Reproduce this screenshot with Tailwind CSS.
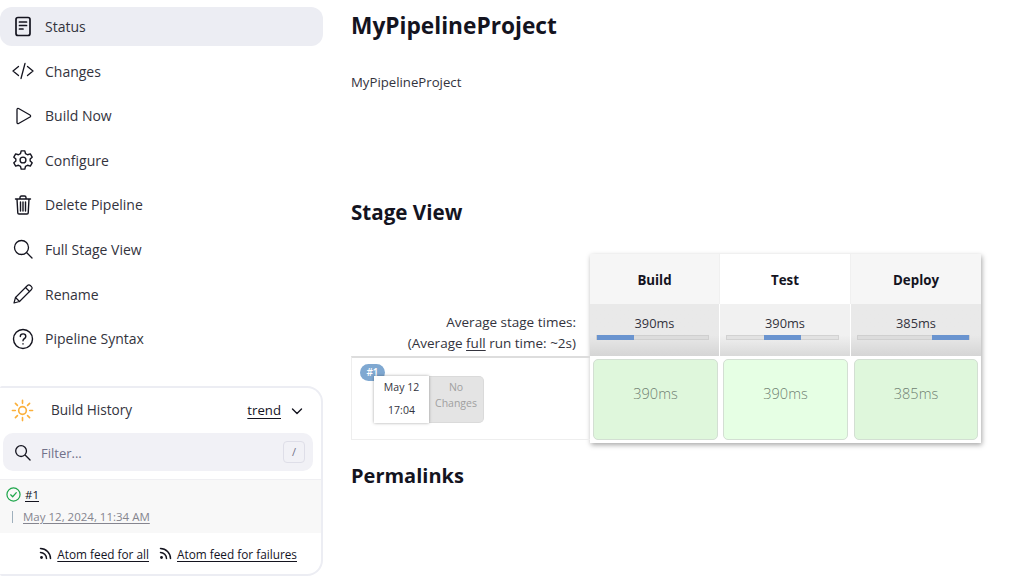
<!DOCTYPE html>
<html lang="en">
<head>
  <meta charset="UTF-8">
  <meta name="viewport" content="width=device-width, initial-scale=1.0">
  <title>MyPipelineProject</title>
  <script src="https://cdn.jsdelivr.net/npm/@tailwindcss/browser@4"></script>
</head>
<body class="bg-white h-[582px] w-[1010px] overflow-hidden font-['Open_Sans','Noto_Sans',sans-serif] text-[#14141f]">
  <div class="flex">
    <!-- sidebar -->
    <aside class="w-[323px] shrink-0 pt-[7px]">
      <nav class="flex flex-col gap-[5.6px] text-[14px] font-medium text-[#33333d]">
        <a class="flex items-center h-[39px] rounded-[12px] bg-[#ecedf3]">
          <span class="w-[45px] flex justify-center">
            <svg class="w-[22px] h-[22px]" viewBox="0 0 22 22" fill="none" stroke="#14141f" stroke-width="1.700" stroke-linecap="round" stroke-linejoin="round"><rect x="4" y="1.500" width="14" height="18" rx="2"/><path d="M7.500 6h7M7.500 9.500h7M7.500 13h3.500"/></svg>
          </span>
          <span>Status</span>
        </a>
        <a class="flex items-center h-[39px]">
          <span class="w-[45px] flex justify-center">
            <svg class="w-[22px] h-[22px]" viewBox="0 0 22 22" fill="none" stroke="#14141f" stroke-width="1.300" stroke-linecap="round" stroke-linejoin="round"><path d="M6.500 6.500 1 11l5.500 4.500M15.500 6.500 21 11l-5.500 4.500M13 3.500 9 18.500"/></svg>
          </span>
          <span>Changes</span>
        </a>
        <a class="flex items-center h-[39px]">
          <span class="w-[45px] flex justify-center">
            <svg class="w-[22px] h-[22px]" viewBox="0 0 22 22" fill="none" stroke="#14141f" stroke-width="1.300" stroke-linecap="round" stroke-linejoin="round"><path d="M5 4.500c0-1 .8-1.400 1.600-1L18 10c.8.500.8 1.500 0 2L6.600 18.500c-.8.400-1.600 0-1.600-1z"/></svg>
          </span>
          <span>Build Now</span>
        </a>
        <a class="flex items-center h-[39px]">
          <span class="w-[45px] flex justify-center">
            <svg class="w-[22px] h-[22px]" viewBox="0 0 24 24" fill="none" stroke="#14141f" stroke-width="1.500" stroke-linecap="round" stroke-linejoin="round"><path d="M10 2h4l.7 3 2.300 1.300 3-.9 2 3.500-2.200 2.100v2l2.200 2.100-2 3.500-3-.9-2.300 1.300-.7 3h-4l-.7-3L7 17.700l-3 .9-2-3.500 2.200-2.100v-2L2 8.900l2-3.500 3 .9L9.300 5z"/><circle cx="12" cy="12" r="3.200"/></svg>
          </span>
          <span>Configure</span>
        </a>
        <a class="flex items-center h-[39px]">
          <span class="w-[45px] flex justify-center">
            <svg class="w-[22px] h-[22px]" viewBox="0 0 22 22" fill="none" stroke="#14141f" stroke-width="1.400" stroke-linecap="round" stroke-linejoin="round"><path d="M3.500 5h15M8 5V3.500c0-.8.500-1.500 1.500-1.500h3c1 0 1.500.7 1.500 1.500V5M5 5l.8 14c0 .7.600 1 1.200 1h8c.6 0 1.200-.3 1.200-1L17 5M8.500 8v9M11 8v9M13.500 8v9"/></svg>
          </span>
          <span>Delete Pipeline</span>
        </a>
        <a class="flex items-center h-[39px]">
          <span class="w-[45px] flex justify-center">
            <svg class="w-[22px] h-[22px]" viewBox="0 0 22 22" fill="none" stroke="#14141f" stroke-width="1.300" stroke-linecap="round"><circle cx="9.500" cy="9.500" r="7"/><path d="m14.800 14.800 5.200 5.200"/></svg>
          </span>
          <span>Full Stage View</span>
        </a>
        <a class="flex items-center h-[39px]">
          <span class="w-[45px] flex justify-center">
            <svg class="w-[22px] h-[22px]" viewBox="0 0 22 22" fill="none" stroke="#14141f" stroke-width="1.200" stroke-linecap="round" stroke-linejoin="round"><path d="M2 20l1.500-5.500L15.500 2.500c.8-.8 2-.8 2.800 0l1.200 1.200c.8.800.8 2 0 2.800L7.500 18.500z"/><path d="M13.500 4.500l4 4M3.500 14.500l4 4"/></svg>
          </span>
          <span>Rename</span>
        </a>
        <a class="flex items-center h-[39px]">
          <span class="w-[45px] flex justify-center">
            <svg class="w-[22px] h-[22px]" viewBox="0 0 22 22" fill="none" stroke="#14141f" stroke-width="1.400" stroke-linecap="round" stroke-linejoin="round"><circle cx="11" cy="11" r="9.500"/><path d="M8.300 8.500c0-1.600 1.200-2.600 2.800-2.600s2.700 1 2.700 2.500c0 2.200-2.800 2.300-2.800 4.400"/><path d="M11 15.800v.2"/></svg>
          </span>
          <span>Pipeline Syntax</span>
        </a>
      </nav>

      <!-- build history -->
      <section class="mt-[28px] h-[190px] border-2 border-l-0 border-[#ecedf3] rounded-r-[16px] rounded-l-[2px] flex flex-col">
        <div class="flex items-center h-[45px] pl-[11px] pr-[18px] text-[13.600px] font-medium text-[#33333d]">
          <svg class="w-[23px] h-[23px] shrink-0" viewBox="0 0 24 24" fill="none" stroke="#fbb03b" stroke-width="1.700" stroke-linecap="round"><circle cx="12" cy="12" r="4"/><path d="M12 1.500v3M12 19.500v3M1.500 12h3M19.500 12h3M4.600 4.600l2.100 2.100M17.300 17.300l2.100 2.100M4.600 19.400l2.100-2.100M17.300 6.700l2.100-2.100"/></svg>
          <span class="ml-[17px]">Build History</span>
          <a class="ml-auto text-[13.200px] underline underline-offset-[3px] text-[#14141f]">trend</a>
          <svg class="w-[12px] h-[12px] ml-[10px]" viewBox="0 0 12 12" fill="none" stroke="#14141f" stroke-width="1.400" stroke-linecap="round" stroke-linejoin="round"><path d="M1.500 4 6 8.500 10.500 4"/></svg>
        </div>
        <div class="mx-[3px] w-[310px] h-[38px] rounded-[10px] bg-[#f1f1f6] flex items-center pl-[11px] pr-[8px] text-[13px]">
          <svg class="w-[17px] h-[17px] shrink-0" viewBox="0 0 18 18" fill="none" stroke="#14141f" stroke-width="1.400" stroke-linecap="round"><circle cx="7.500" cy="7.500" r="5.700"/><path d="m12 12 5 5"/></svg>
          <span class="ml-[10px] pt-[3px] font-medium text-[#72728a]">Filter...</span>
          <span class="ml-auto w-[22px] h-[22px] border border-[#dedee8] rounded-[4px] flex items-center justify-center text-[11px] text-[#72728a]">/</span>
        </div>
        <div class="mt-[8px] h-[54px] bg-[#f8f8f8] border-t border-[#efeff2] pl-[6px] pt-[4px]">
          <div class="flex items-center h-[20px]">
            <svg class="w-[15px] h-[15px]" viewBox="0 0 16 16" fill="none" stroke="#1ea64b" stroke-width="1.300" stroke-linecap="round" stroke-linejoin="round"><circle cx="8" cy="8" r="7"/><path d="m5 8.300 2.100 2.100L11 6"/></svg>
            <a class="ml-[4px] text-[11.500px] underline underline-offset-[2px]">#1</a>
          </div>
          <div class="flex items-center h-[25px] text-[11.500px] text-[#85858f]">
            <span class="ml-[6px] w-px h-[12px] bg-[#9fb0bd]"></span>
            <a class="ml-[10px] underline underline-offset-[2px]">May 12, 2024, 11:34 AM</a>
          </div>
        </div>
        <div class="flex items-center justify-end gap-[10px] pt-[13px] pr-[24px] text-[11.800px] font-medium">
          <span class="flex items-center gap-[4px]">
            <svg class="w-[14px] h-[14px] -mt-[5px]" viewBox="0 0 14 14" fill="none" stroke="#14141f" stroke-width="1.500" stroke-linecap="round"><circle cx="2.500" cy="11.500" r="1.400" fill="#14141f" stroke="none"/><path d="M1.500 6.500c3.300 0 6 2.700 6 6M1.500 2.500c5.500 0 10 4.500 10 10"/></svg>
            <a class="underline underline-offset-[2px]">Atom feed for all</a>
          </span>
          <span class="flex items-center gap-[4px]">
            <svg class="w-[14px] h-[14px] -mt-[5px]" viewBox="0 0 14 14" fill="none" stroke="#14141f" stroke-width="1.500" stroke-linecap="round"><circle cx="2.500" cy="11.500" r="1.400" fill="#14141f" stroke="none"/><path d="M1.500 6.500c3.300 0 6 2.700 6 6M1.500 2.500c5.500 0 10 4.500 10 10"/></svg>
            <a class="underline underline-offset-[2px]">Atom feed for failures</a>
          </span>
        </div>
      </section>
    </aside>

    <!-- main -->
    <main class="ml-[28px] w-[640px]">
      <h1 class="mt-[9px] text-[22.700px] leading-[34px] font-bold">MyPipelineProject</h1>
      <p class="mt-[30px] text-[13.200px] leading-[18px] text-[#33333d]">MyPipelineProject</p>

      <h2 class="mt-[107px] text-[20.600px] leading-[28px] font-bold">Stage View</h2>

      <div class="mt-[28px] flex items-start">
        <!-- left labels -->
        <div class="w-[239px] shrink-0 pt-[58px]">
          <div class="h-[44px] pr-[14px] text-right text-[13.500px] leading-[21px] text-[#33333d]">
            <div>Average stage times:</div>
            <div>(Average <span class="underline underline-offset-[2px]">full</span> run time: ~2s)</div>
          </div>
          <div class="relative h-[84px] border-l border-b border-[#eeeeee] border-t-2 border-t-[#dddddd]">
            <span class="absolute left-[8px] top-[6px] w-[25px] h-[17px] rounded-full bg-[#7fa8d1] text-white text-[10px] font-semibold leading-[17px] text-center">#1</span>
            <div class="flex ml-[22px] mt-[18px] h-[47px] text-[10.500px] text-center">
              <div class="w-[55px] bg-white shadow-[0_0_3px_rgba(0,0,0,0.35)] z-10 leading-[23px] text-[#33333d]">May 12<br>17:04</div>
              <div class="w-[55px] bg-[#e4e4e4] rounded-r-[5px] border border-l-0 border-[#dadada] text-[#a0a0a0] leading-[16px] pt-[2px]">No<br>Changes</div>
            </div>
          </div>
        </div>

        <!-- stage table -->
        <div class="w-[391px] shrink-0 bg-white shadow-[1px_2px_5px_rgba(0,0,0,0.35)] grid grid-cols-[130px_131px_130px]">
          <div class="h-[50px] bg-[#f6f6f6] flex items-center justify-center pt-[3px] text-[13.300px] font-bold border-r border-[#f0f0f0]">Build</div>
          <div class="h-[50px] bg-white flex items-center justify-center pt-[3px] text-[13.300px] font-bold border-r border-[#f0f0f0]">Test</div>
          <div class="h-[50px] bg-[#f6f6f6] flex items-center justify-center pt-[3px] text-[13.300px] font-bold">Deploy</div>

          <div class="h-[52px] bg-gradient-to-b from-[#e9e9e9] from-60% to-[#d5d5d5] border-r border-white pl-[6px] pr-[10px] pt-[11px] text-center text-[12.800px] leading-[16px] text-[#33333d]">
            <div class="pl-[4px]">390ms</div>
            <div class="mt-[4px] h-[5px] bg-[#dcdcdc] border border-[#cfcfcf] flex"><span class="w-1/3 -my-px bg-[#6a94cf]"></span></div>
          </div>
          <div class="h-[52px] bg-gradient-to-b from-[#f1f1f1] from-60% to-[#d9d9d9] border-r border-white pl-[6px] pr-[11px] pt-[11px] text-center text-[12.800px] leading-[16px] text-[#33333d]">
            <div class="pl-[5px]">390ms</div>
            <div class="mt-[4px] h-[5px] bg-[#e2e2e2] border border-[#d2d2d2] flex justify-center"><span class="w-1/3 -my-px bg-[#6a94cf]"></span></div>
          </div>
          <div class="h-[52px] bg-gradient-to-b from-[#e9e9e9] from-60% to-[#d5d5d5] pl-[6px] pr-[11px] pt-[11px] text-center text-[12.800px] leading-[16px] text-[#33333d]">
            <div class="pl-[5px]">385ms</div>
            <div class="mt-[4px] h-[5px] bg-[#dcdcdc] border border-[#cfcfcf] flex justify-end"><span class="w-1/3 -my-px bg-[#6a94cf]"></span></div>
          </div>

          <div class="h-[87px] p-[3px] pr-[2px]"><div class="h-[81px] bg-[#dff7dc] border border-[#d3dfd3] rounded-[5px] flex items-start justify-center pt-[23px] text-[14.500px] font-light text-[#6f7f72]">390ms</div></div>
          <div class="h-[87px] p-[3px] pr-[3px]"><div class="h-[81px] bg-[#e6ffe4] border border-[#d3dfd3] rounded-[5px] flex items-start justify-center pt-[23px] text-[14.500px] font-light text-[#6f7f72]">390ms</div></div>
          <div class="h-[87px] p-[3px]"><div class="h-[81px] bg-[#dff7dc] border border-[#d3dfd3] rounded-[5px] flex items-start justify-center pt-[23px] text-[14.500px] font-light text-[#6f7f72]">385ms</div></div>
        </div>
      </div>

      <h2 class="mt-[19px] text-[20px] leading-[28px] font-bold">Permalinks</h2>
    </main>
  </div>
</body>
</html>
